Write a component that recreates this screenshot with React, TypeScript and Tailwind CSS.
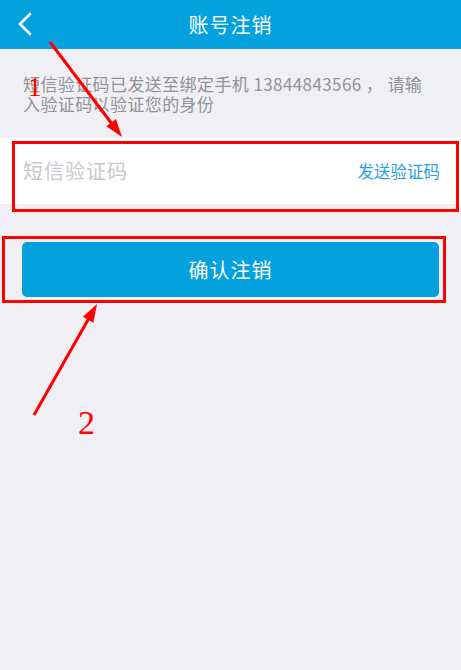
import React from 'react';

const cjk = { fontFamily: '"Noto Sans CJK SC", "Noto Sans", sans-serif' };
const serif = { fontFamily: '"Liberation Serif", serif' };

export default function App() {
  return (
    <div className="relative h-[670px] w-[461px] overflow-hidden bg-[#efeff4]" style={cjk}>
      <div className="relative flex h-[49px] items-center justify-center bg-[#03a2df]">
        <svg className="absolute left-[16px] top-[12px]" width="18" height="24" viewBox="0 0 18 24">
          <path d="M14 2 L4 12 L14 22" fill="none" stroke="#fff" strokeWidth="2.6" strokeLinecap="round" strokeLinejoin="round" />
        </svg>
        <span className="text-[20px] tracking-[1px] text-white">账号注销</span>
      </div>

      <p className="whitespace-nowrap px-[23px] pt-[25px] text-[17px] leading-[20px] tracking-[0.4px] text-[#929297]">
        短信验证码已发送至绑定手机 13844843566 ， 请输
        <br />
        入验证码以验证您的身份
      </p>

      <div className="mt-[24px] flex h-[66px] items-center justify-between bg-white pl-[23px] pr-[21px]">
        <input
          placeholder="短信验证码"
          className="w-[200px] bg-transparent text-[20px] tracking-[1px] outline-none placeholder:text-[#c7c7cc]"
          style={cjk}
        />
        <span className="text-[16.5px] text-[#26a0e2]">发送验证码</span>
      </div>

      <button className="mx-[22px] mt-[38px] flex h-[55px] w-[417px] items-center justify-center rounded-[5px] bg-[#03a2df] text-[20px] tracking-[1px] text-white">
        确认注销
      </button>

      {/* annotations */}
      <div className="absolute left-[12px] top-[141px] h-[71px] w-[447px] border-[3px] border-[#ff0000]" />
      <div className="absolute left-[2px] top-[236px] h-[67px] w-[444px] border-[3px] border-[#ff0000]" />
      <svg className="absolute left-0 top-0" width="461" height="670">
        <line x1="50" y1="42" x2="112" y2="124" stroke="#ff0000" strokeWidth="3" />
        <polygon points="122,137 106.3,126.3 115.9,119.1" fill="#ff0000" />
        <line x1="34" y1="415" x2="89" y2="318" stroke="#ff0000" strokeWidth="3" />
        <polygon points="97,304 93.3,322.7 82.9,316.7" fill="#ff0000" />
      </svg>
      <span className="absolute left-[28px] top-[74px] text-[27px] leading-none text-[#ff0000]" style={serif}>
        1
      </span>
      <span className="absolute left-[78px] top-[406px] text-[34px] leading-none text-[#ff0000]" style={serif}>
        2
      </span>
    </div>
  );
}
